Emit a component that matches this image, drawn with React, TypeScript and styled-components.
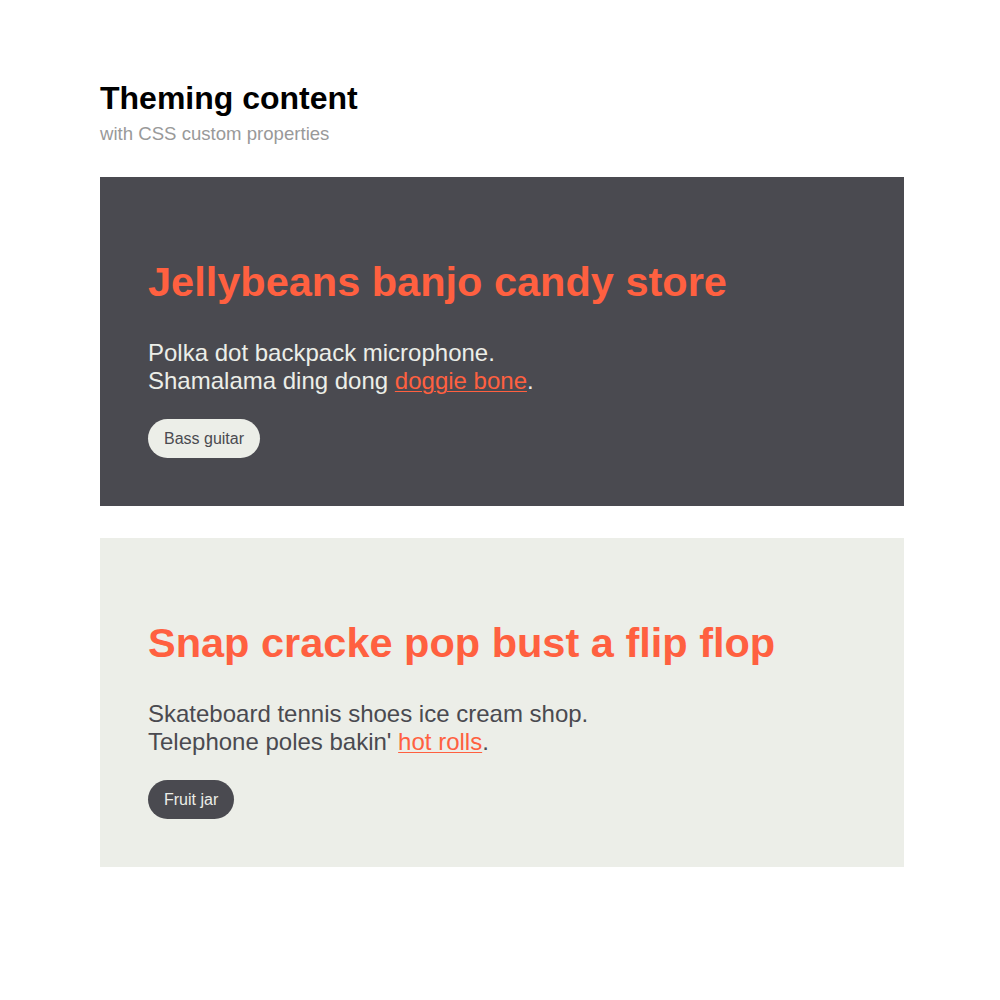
import React from "react";
import styled, { createGlobalStyle } from "styled-components";

const Global = createGlobalStyle`
  html, body { margin: 0; padding: 0; background: #ffffff; }
  body { font-family: "Liberation Sans", Arial, Helvetica, sans-serif; }
`;

const Page = styled.main`
  padding: 80px 96px 0 100px;
  display: flex;
  flex-direction: column;
`;

const Header = styled.header`
  display: flex;
  flex-direction: column;
  gap: 7px;
  margin-bottom: 32px;
`;

const Title = styled.h1`
  margin: 0;
  font-size: 32px;
  line-height: 36px;
  font-weight: 700;
  color: #000;
`;

const Subtitle = styled.p`
  margin: 0;
  font-size: 18.6px;
  line-height: 22px;
  color: #999999;
`;

const Stack = styled.div`
  display: flex;
  flex-direction: column;
  gap: 32px;
`;

type Theme = { bg: string; fg: string; accent: string; btnBg: string; btnFg: string };

const dark: Theme = { bg: "#4a4a50", fg: "#eceee8", accent: "#ff6040", btnBg: "#eceee8", btnFg: "#4a4a50" };
const light: Theme = { bg: "#eceee8", fg: "#4a4a50", accent: "#ff6040", btnBg: "#4a4a50", btnFg: "#eceee8" };

const Card = styled.section<{ $t: Theme }>`
  background: ${(p) => p.$t.bg};
  color: ${(p) => p.$t.fg};
  padding: 80px 48px 48px;
  display: flex;
  flex-direction: column;
  align-items: flex-start;
`;

const CardTitle = styled.h2<{ $t: Theme }>`
  margin: 0 0 32px;
  font-size: 41.5px;
  line-height: 50px;
  font-weight: 700;
  color: ${(p) => p.$t.accent};
`;

const Text = styled.p`
  margin: 0 0 24px;
  font-size: 24px;
  line-height: 28px;
`;

const Link = styled.a<{ $t: Theme }>`
  color: ${(p) => p.$t.accent};
  text-decoration: underline;
  text-decoration-thickness: 1px;
  text-underline-offset: 2px;
`;

const Button = styled.button<{ $t: Theme }>`
  border: none;
  border-radius: 20px;
  height: 39px;
  padding: 0 16px;
  font-family: inherit;
  font-size: 16px;
  background: ${(p) => p.$t.btnBg};
  color: ${(p) => p.$t.btnFg};
`;

export default function App() {
  return (
    <>
      <Global />
      <Page>
        <Header>
          <Title>Theming content</Title>
          <Subtitle>with CSS custom properties</Subtitle>
        </Header>
        <Stack>
          <Card $t={dark}>
            <CardTitle $t={dark}>Jellybeans banjo candy store</CardTitle>
            <Text>
              Polka dot backpack microphone.
              <br />
              Shamalama ding dong <Link $t={dark} href="#">doggie bone</Link>.
            </Text>
            <Button $t={dark}>Bass guitar</Button>
          </Card>
          <Card $t={light}>
            <CardTitle $t={light}>Snap cracke pop bust a flip flop</CardTitle>
            <Text>
              Skateboard tennis shoes ice cream shop.
              <br />
              Telephone poles bakin' <Link $t={light} href="#">hot rolls</Link>.
            </Text>
            <Button $t={light}>Fruit jar</Button>
          </Card>
        </Stack>
      </Page>
    </>
  );
}
